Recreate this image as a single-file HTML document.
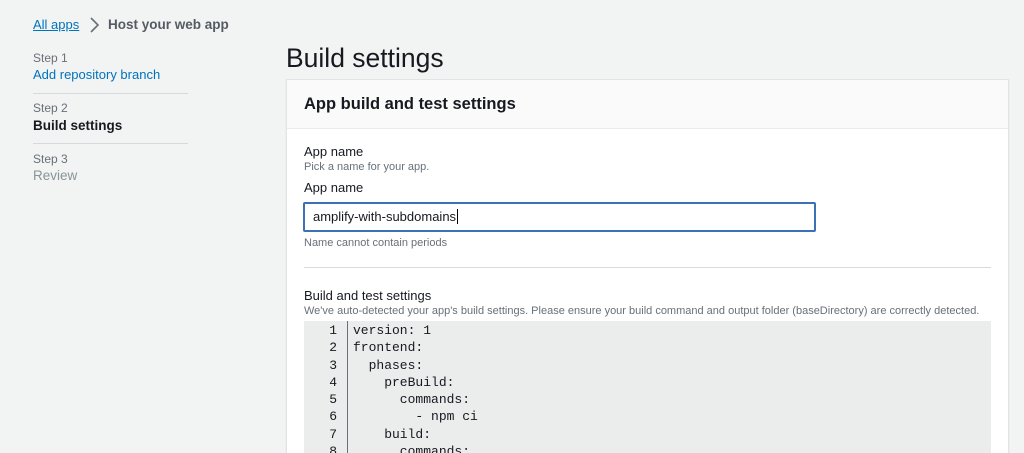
<!DOCTYPE html>
<html style="overflow:hidden"><head><meta charset="utf-8"><style>
*{margin:0;padding:0;box-sizing:border-box}
html,body{width:1024px;height:453px;overflow:hidden}
body{background:#f2f3f3;font-family:"Liberation Sans",Arial,sans-serif;color:#16191f;position:relative}
.a{position:absolute;white-space:nowrap}
.step{font-size:12px;color:#687078}
.hr{position:absolute;left:33px;width:155px;height:1px;background:#d5dbdb}
.panel{position:absolute;left:286px;top:79px;width:723px;height:374px;background:#fff;border:1px solid #e1e4e4;border-bottom:none;box-shadow:0 1px 1px rgba(0,0,0,.1);overflow:hidden}
.ph{position:absolute;left:0;top:0;right:0;height:49px;background:#fafafa;border-bottom:1px solid #eaeded}
.code{position:absolute;left:17px;top:241px;width:687px;height:140px;background:#ebecec;font-family:"Liberation Mono","DejaVu Sans Mono",monospace;font-size:13px;color:#16191f}
.gut{position:absolute;left:0;top:0;width:44px;border-right:1px solid #687078;height:140px;text-align:right;padding-right:10px;line-height:17.3px;padding-top:1px}
.src{position:absolute;left:49px;top:0;line-height:17.3px;padding-top:1px;white-space:pre}
</style></head><body>
<div class="a" style="left:33px;top:17px;font-size:13px;color:#0073bb;text-decoration:underline">All apps</div>
<svg class="a" style="left:88px;top:16px" width="12" height="18"><path d="M3 2 L10 9 L3 16" stroke="#687078" stroke-width="1.6" fill="none"/></svg>
<div class="a" style="left:108px;top:17px;font-size:13.5px;font-weight:bold;color:#545b64">Host your web app</div>
<div class="a step" style="left:33px;top:51px">Step 1</div>
<div class="a" style="left:33px;top:67px;font-size:13px;color:#0073bb">Add repository branch</div>
<div class="hr" style="top:93px"></div>
<div class="a step" style="left:33px;top:101px">Step 2</div>
<div class="a" style="left:33px;top:118px;font-size:13.5px;font-weight:bold">Build settings</div>
<div class="hr" style="top:143px"></div>
<div class="a step" style="left:33px;top:152px">Step 3</div>
<div class="a" style="left:33px;top:168px;font-size:13.5px;color:#879596">Review</div>
<div class="a" style="left:286px;top:43px;font-size:26.5px;color:#16191f">Build settings</div>
<div class="panel">
<div class="ph"><div class="a" style="left:17px;top:15px;font-size:16.5px;font-weight:bold">App build and test settings</div></div>
<div class="a" style="left:17px;top:64px;font-size:13px">App name</div>
<div class="a" style="left:17px;top:81px;font-size:11px;color:#687078">Pick a name for your app.</div>
<div class="a" style="left:17px;top:100px;font-size:13px">App name</div>
<div class="a" style="left:16px;top:122px;width:513px;height:30px;border:2px solid #3b72b5;border-radius:2px"></div>
<div class="a" style="left:26px;top:129px;font-size:13px">amplify-with-subdomains<span style="border-left:1px solid #000;margin-left:1px"></span></div>
<div class="a" style="left:17px;top:157px;font-size:11px;color:#687078">Name cannot contain periods</div>
<div class="a" style="left:17px;top:187px;width:687px;height:1px;background:#d5dbdb"></div>
<div class="a" style="left:17px;top:208px;font-size:13px">Build and test settings</div>
<div class="a" style="left:17px;top:225px;font-size:11px;color:#687078">We've auto-detected your app's build settings. Please ensure your build command and output folder (baseDirectory) are correctly detected.</div>
<div class="code">
<div class="gut">1<br>2<br>3<br>4<br>5<br>6<br>7<br>8</div>
<div class="src">version: 1
frontend:
  phases:
    preBuild:
      commands:
        - npm ci
    build:
      commands:</div>
</div>
</div>
</body></html>
